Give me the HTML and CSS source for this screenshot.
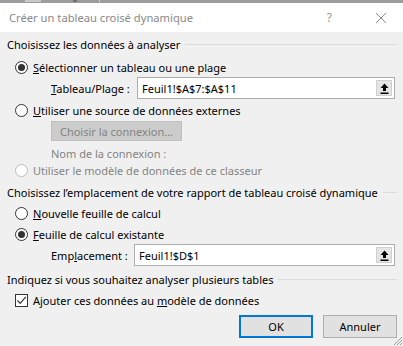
FILE: index.html
```html
<!DOCTYPE html>
<html lang="fr">
<head>
    <meta charset="UTF-8">
    <title>Créer un tableau croisé dynamique</title>
    <link rel="stylesheet" href="styles.css">
</head>
<body>
    <!-- Excel sheet peeking behind the dialog -->
    <div class="backdrop">
        <span class="bd-cell one"></span>
        <span class="bd-cell two"></span>
        <span class="bd-cell three"></span>
    </div>

    <div class="dialog">
        <!-- Title bar -->
        <div class="titlebar">
            <span class="title">Créer un tableau croisé dynamique</span>
            <span class="title-help">?</span>
            <svg class="title-close" width="12" height="12" viewBox="0 0 12 12">
                <path d="M1 1 L11 11 M11 1 L1 11" stroke="#8a8a8a" stroke-width="1" fill="none"/>
            </svg>
        </div>

        <div class="content">
            <!-- Source -->
            <div class="legend legend-first"><span>Choisissez les données à analyser</span><i class="rule"></i></div>

            <label class="option opt-1">
                <span class="radio checked"></span>
                <span><u>S</u>électionner un tableau ou une plage</span>
            </label>

            <div class="field-row row-range">
                <span class="field-label"><u>T</u>ableau/Plage :</span>
                <div class="field">
                    <span class="field-value">Feuil1!$A$7:$A$11</span>
                    <span class="pick"><svg width="9" height="11" viewBox="0 0 9 11"><path d="M4.5 0.5 L8.5 5 L6 5 L6 8 L3 8 L3 5 L0.5 5 Z" fill="#000"/><rect x="0.5" y="9.5" width="8" height="1.5" fill="#000"/></svg></span>
                </div>
            </div>

            <label class="option opt-2">
                <span class="radio"></span>
                <span><u>U</u>tiliser une source de données externes</span>
            </label>

            <div class="sub-row row-btn">
                <button class="btn-disabled">Choisir la connexion...</button>
            </div>

            <div class="sub-row row-name">
                <span class="muted">Nom de la connexion :</span>
            </div>

            <label class="option opt-3 disabled">
                <span class="radio"></span>
                <span>Utiliser le modèle de données de ce classeur</span>
            </label>

            <!-- Destination -->
            <div class="legend legend-second"><span>Choisissez l’emplacement de votre rapport de tableau croisé dynamique</span><i class="rule"></i></div>

            <label class="option opt-4">
                <span class="radio"></span>
                <span><u>N</u>ouvelle feuille de calcul</span>
            </label>

            <label class="option opt-5">
                <span class="radio checked"></span>
                <span><u>F</u>euille de calcul existante</span>
            </label>

            <div class="field-row row-dest">
                <span class="field-label">Emp<u>l</u>acement :</span>
                <div class="field">
                    <span class="field-value">Feuil1!$D$1</span>
                    <span class="pick"><svg width="9" height="11" viewBox="0 0 9 11"><path d="M4.5 0.5 L8.5 5 L6 5 L6 8 L3 8 L3 5 L0.5 5 Z" fill="#000"/><rect x="0.5" y="9.5" width="8" height="1.5" fill="#000"/></svg></span>
                </div>
            </div>

            <!-- Multiple tables -->
            <div class="legend legend-third"><span>Indiquez si vous souhaitez analyser plusieurs tables</span><i class="rule"></i></div>

            <label class="option opt-6">
                <span class="checkbox"><svg width="11" height="11" viewBox="0 0 11 11"><path d="M1.5 5.5 L4.2 8.3 L9.8 1.8" stroke="#333" stroke-width="1.2" fill="none"/></svg></span>
                <span>Ajouter ces données au <u>m</u>odèle de données</span>
            </label>

            <div class="actions">
                <button class="btn btn-default">OK</button>
                <button class="btn">Annuler</button>
            </div>
        </div>

        <svg class="grip" width="12" height="12" viewBox="0 0 12 12">
            <path d="M11 3 L3 11 M11 6 L6 11 M11 9 L9 11" stroke="#a0a0a0" stroke-width="1"/>
        </svg>
    </div>
</body>
</html>
```

FILE: styles.css
```css
body {
    margin: 0;
    width: 403px;
    height: 346px;
    overflow: hidden;
    font-family: "Noto Sans", sans-serif;
    font-size: 11px;
    color: #000;
    background: #f0f0f0;
}
.backdrop {
    height: 3px;
    background: #9c9c9c;
    display: flex;
}
.bd-cell {
    display: block;
    height: 2px;
}
.bd-cell.one { width: 16px; margin-left: 25px; background: #c8c8c8; }
.bd-cell.two { width: 4px; margin-left: 32px; background: #707070; }
.bd-cell.three { width: 1px; margin-left: 22px; background: #d0d0d0; }

.dialog {
    position: relative;
    height: 343px;
    background: #f0f0f0;
}
.titlebar {
    height: 29px;
    background: #fff;
    display: flex;
    align-items: center;
    padding-left: 9px;
}
.title {
    font-size: 11.2px;
    color: #8a8a8a;
    flex: 1;
}
.title-help {
    font-size: 12px;
    color: #9a9a9a;
    margin-right: 43px;
}
.title-close {
    margin-right: 16px;
}

.content {
    display: flex;
    flex-direction: column;
    padding: 3px 6px 0 7px;
}
.legend {
    display: flex;
    align-items: center;
    height: 18px;
}
.legend span {
    white-space: nowrap;
}
.legend .rule {
    flex: 1;
    height: 1px;
    background: #dcdcdc;
    margin-left: 5px;
}
.legend-second { margin-top: 4px; }
.legend-third { margin-top: 4px; }

.option {
    display: flex;
    align-items: center;
    height: 18px;
    margin-left: 8px;
}
.opt-1 { margin-top: 5px; }
.opt-2 { margin-top: 2px; }
.opt-3 { margin-top: 0; }
.opt-4 { margin-top: 3px; }
.opt-5 { margin-top: 3px; }
.opt-6 { margin-top: 3px; }
.option.disabled {
    color: #838383;
}
.radio {
    width: 11px;
    height: 11px;
    border: 1px solid #333;
    border-radius: 50%;
    background: #fff;
    margin-right: 5px;
    display: flex;
    align-items: center;
    justify-content: center;
}
.radio.checked::after {
    content: "";
    width: 7px;
    height: 7px;
    border-radius: 50%;
    background: #333;
}
.disabled .radio {
    border-color: #bcbcbc;
}
.checkbox {
    width: 11px;
    height: 11px;
    border: 1px solid #333;
    background: #fff;
    margin-right: 5px;
    display: flex;
    align-items: center;
    justify-content: center;
}
.checkbox svg {
    display: block;
}

.field-row {
    display: flex;
    align-items: center;
    height: 22px;
    margin-left: 44px;
}
.row-range { margin-top: 1px; }
.row-dest { margin-top: 1px; }
.field-label {
    white-space: nowrap;
}
.row-range .field-label { width: 86px; }
.row-dest .field-label { width: 83px; }
.field {
    flex: 1;
    height: 20px;
    border: 1px solid #adadad;
    background: #fff;
    display: flex;
    align-items: center;
    margin-right: 2px;
}
.field-value {
    flex: 1;
    padding-left: 4px;
}
.pick {
    width: 16px;
    height: 16px;
    margin-right: 2px;
    background: #e5e5e5;
    border: 1px solid #d0d0d0;
    box-sizing: border-box;
    display: flex;
    align-items: center;
    justify-content: center;
}

.sub-row {
    display: flex;
    align-items: center;
    margin-left: 44px;
}
.row-btn { margin-top: 2px; height: 20px; }
.row-name { margin-top: 4px; height: 16px; }
.muted {
    color: #838383;
}
.btn-disabled {
    width: 131px;
    height: 20px;
    font: inherit;
    color: #838383;
    background: #cccccc;
    border: 1px solid #bfbfbf;
    padding: 0;
}

.actions {
    display: flex;
    justify-content: flex-end;
    gap: 10px;
    margin-top: 6px;
    margin-right: 0;
}
.btn {
    width: 74px;
    height: 23px;
    font: inherit;
    color: #000;
    background: #e1e1e1;
    border: 1px solid #adadad;
    padding: 0;
}
.btn-default {
    border: 2px solid #0078d7;
}
.grip {
    position: absolute;
    right: 0;
    bottom: 0;
}
```
